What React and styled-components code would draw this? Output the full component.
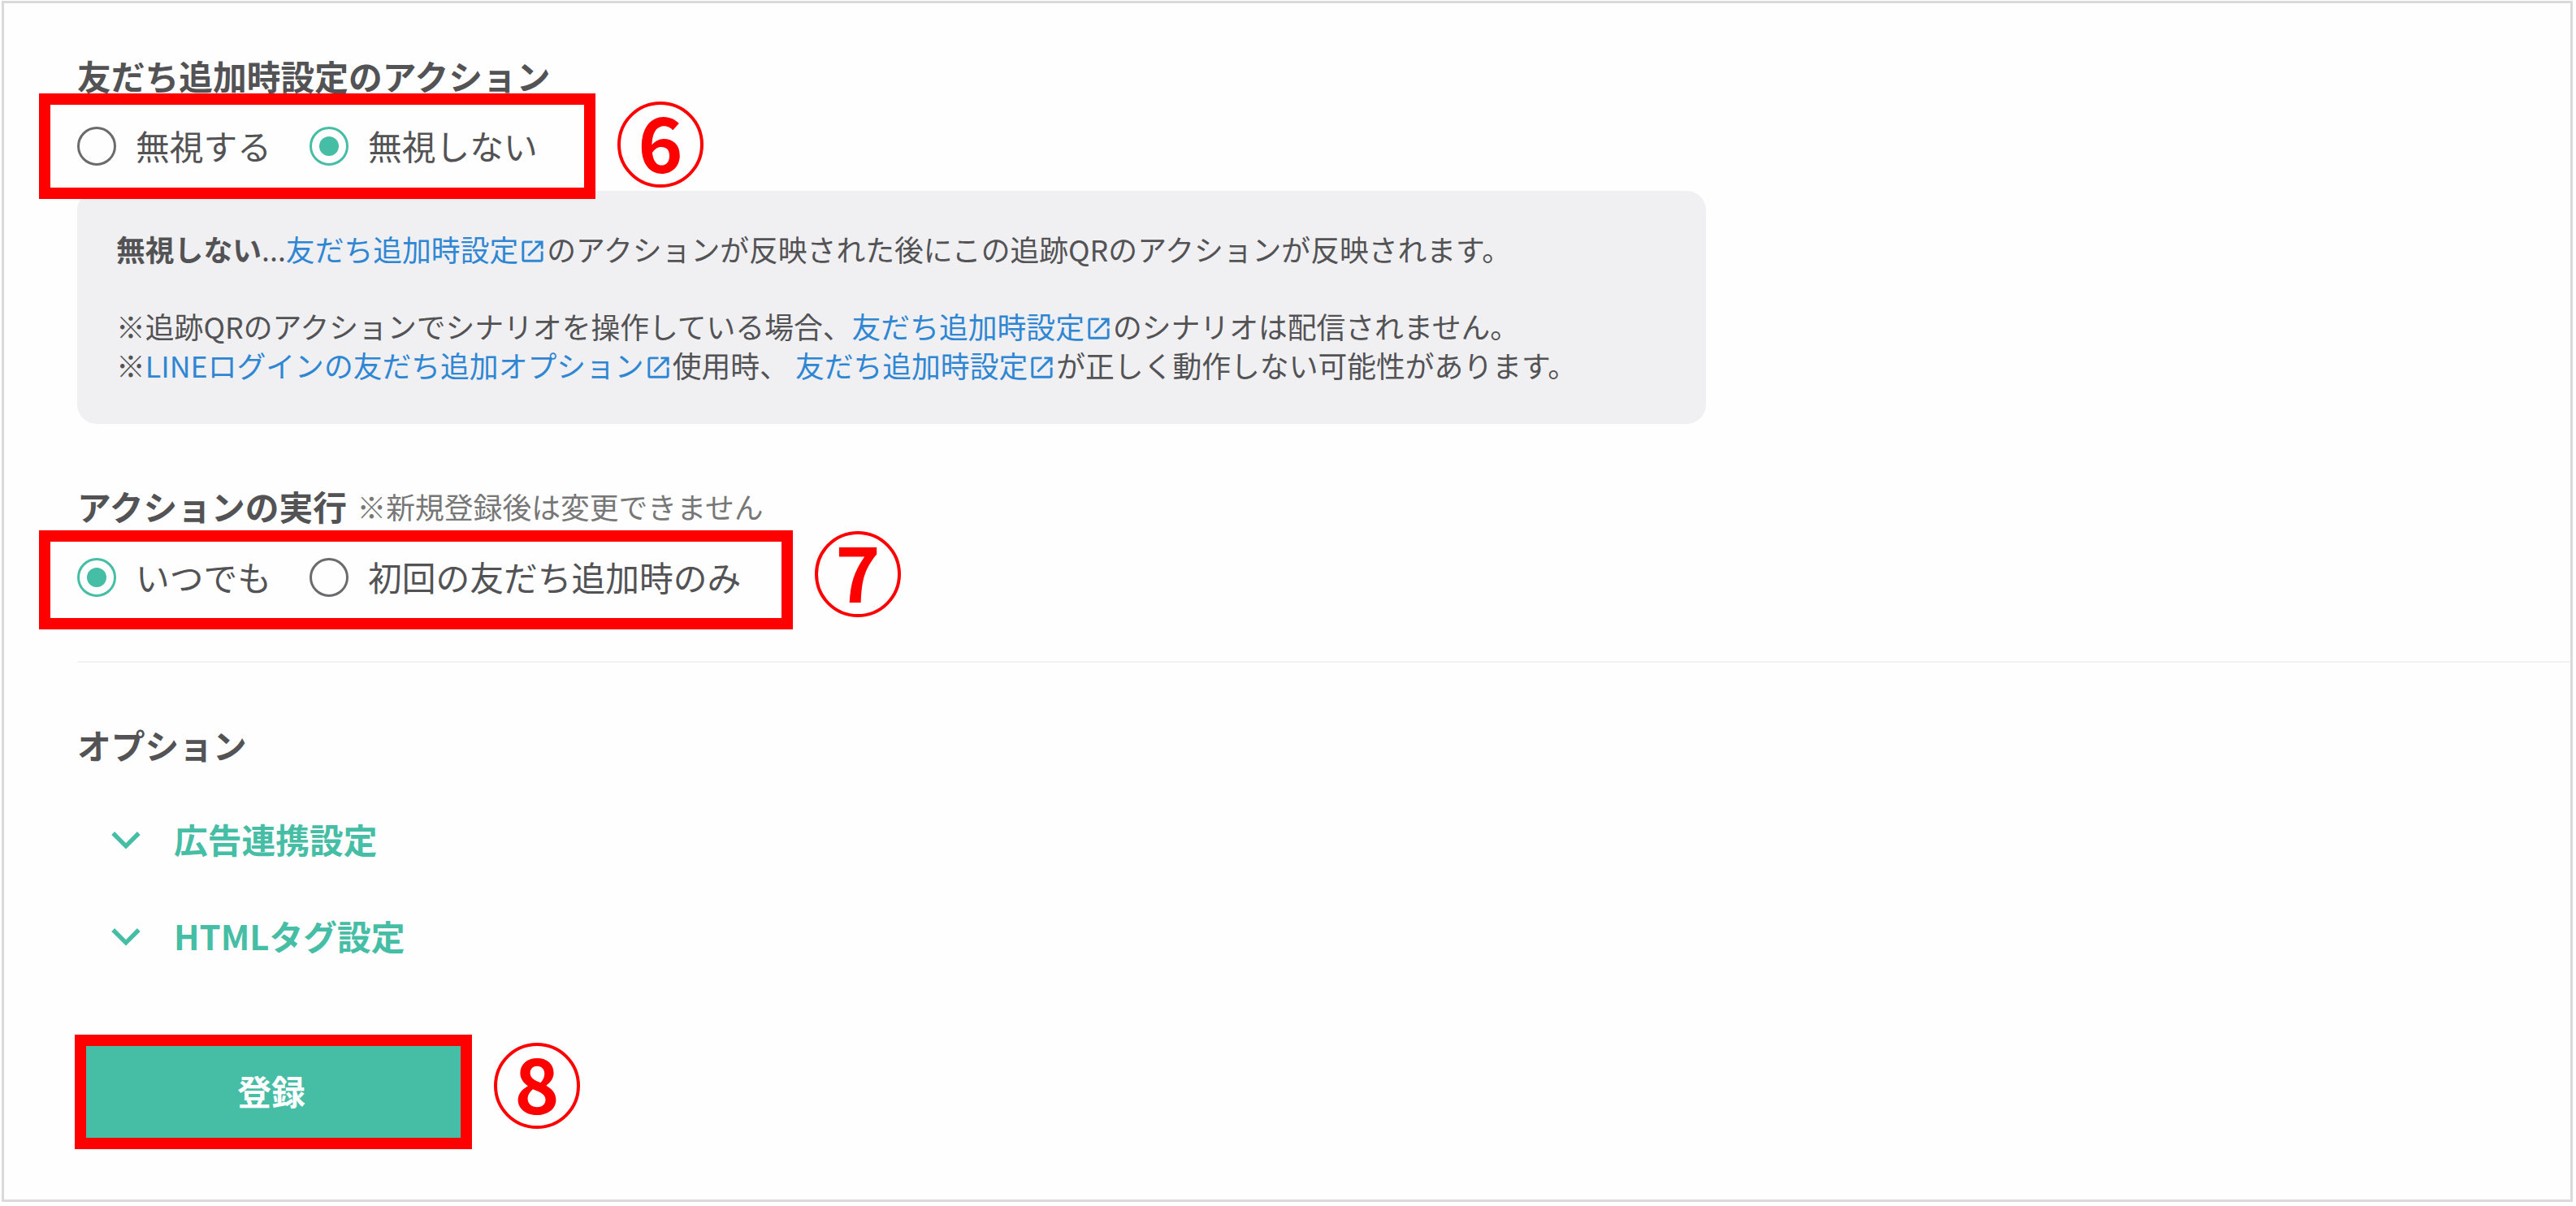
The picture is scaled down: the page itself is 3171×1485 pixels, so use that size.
import styled, { createGlobalStyle } from "styled-components";

const OpenIcon = () => (
  <IconSvg viewBox="0 0 24 24">
    <path d="M19 19H5V5h7V3H5a2 2 0 0 0-2 2v14a2 2 0 0 0 2 2h14c1.1 0 2-.9 2-2v-7h-2v7zM14 3v2h3.59l-9.83 9.83 1.41 1.41L19 6.41V10h2V3h-7z" />
  </IconSvg>
);

const HelpLink = ({ children }) => (
  <Anchor href="#">
    {children}
    <OpenIcon />
  </Anchor>
);

const RadioOption = ({ label, checked }) => (
  <Option>
    <Radio $checked={checked} />
    <span>{label}</span>
  </Option>
);

const AccordionItem = ({ label }) => (
  <Item>
    <svg width="36" height="24" viewBox="0 0 36 24">
      <path d="M2.2 3 L18 18.8 L33.8 3" />
    </svg>
    <span>{label}</span>
  </Item>
);

const App = () => {
  return (
    <>
      <GlobalStyle />
      <Page>
        <Title>友だち追加時設定のアクション</Title>
        <StepRow>
          <Highlight $width={685} $height={130}>
            <RadioOption label="無視する" />
            <RadioOption label="無視しない" checked />
          </Highlight>
          <Step $top={10}>6</Step>
        </StepRow>
        <Panel>
          <p>
            <b>無視しない</b>...<HelpLink>友だち追加時設定</HelpLink>
            のアクションが反映された後にこの追跡QRのアクションが反映されます。
          </p>
          <br />
          <p>
            ※追跡QRのアクションでシナリオを操作している場合、
            <HelpLink>友だち追加時設定</HelpLink>
            のシナリオは配信されません。
          </p>
          <p>
            ※<HelpLink>LINEログインの友だち追加オプション</HelpLink>
            使用時、 <HelpLink>友だち追加時設定</HelpLink>
            が正しく動作しない可能性があります。
          </p>
        </Panel>
        <Title $top={83}>
          アクションの実行 <small>※新規登録後は変更できません</small>
        </Title>
        <StepRow $top={8}>
          <Highlight $width={928} $height={122}>
            <RadioOption label="いつでも" checked />
            <RadioOption label="初回の友だち追加時のみ" />
          </Highlight>
          <Step $top={1}>7</Step>
        </StepRow>
        <Divider />
        <Title $top={83}>オプション</Title>
        <Accordion>
          <AccordionItem label="広告連携設定" />
          <AccordionItem label="HTMLタグ設定" />
        </Accordion>
        <SubmitRow>
          <Submit>登録</Submit>
          <Step $top={10}>8</Step>
        </SubmitRow>
      </Page>
    </>
  );
};

const GlobalStyle = createGlobalStyle`
  * {
    box-sizing: border-box;
  }
  body {
    margin: 0;
    background: #fff;
    color: #535355;
    font-family: "Noto Sans CJK JP", sans-serif;
    font-size: 41.75px;
  }
  p {
    margin: 0;
  }
`;

const Page = styled.main`
  width: 3165px;
  height: 1479px;
  margin: 1px 0 0 2px;
  padding: 71px 0 0 90px;
  border: 3px solid #dadada;
  background: #fefefe;
`;

const Title = styled.h2`
  height: 40px;
  margin: ${({ $top = 0 }) => $top}px 0 0;
  font-size: 41.75px;
  font-weight: 700;
  line-height: 36px;
  white-space: nowrap;
  small {
    margin-left: 3px;
    color: #777;
    font-size: 35.8px;
    font-weight: 400;
    line-height: 1;
    vertical-align: 2px;
  }
`;

const StepRow = styled.div`
  position: relative;
  z-index: 1;
  display: flex;
  gap: 27px;
  margin: ${({ $top = 0 }) => $top}px 0 0 -47px;
`;

const Highlight = styled.div`
  display: flex;
  gap: 47px;
  width: ${({ $width }) => $width}px;
  height: ${({ $height }) => $height}px;
  padding: ${({ $height }) => ($height === 130 ? 27 : 20)}px 0 0 33px;
  border: 14px solid #f00;
`;

const Option = styled.label`
  display: flex;
  gap: 24px;
  height: 48px;
  line-height: 46px;
  white-space: nowrap;
`;

const Radio = styled.span`
  display: flex;
  width: 48px;
  height: 48px;
  padding: 9px;
  border: 3px solid ${({ $checked }) => ($checked ? "#46bda5" : "#6b6b6d")};
  border-radius: 50%;
  &::after {
    content: "";
    flex: 1;
    border-radius: 50%;
    background: ${({ $checked }) => ($checked ? "#46bda5" : "transparent")};
  }
`;

const Step = styled.span`
  display: flex;
  justify-content: center;
  width: 106px;
  height: 106px;
  margin-top: ${({ $top }) => $top}px;
  border: 4px solid #f00;
  border-radius: 50%;
  color: #f00;
  font-size: 94px;
  font-weight: 700;
  line-height: 86px;
`;

const Panel = styled.section`
  width: 2005px;
  height: 287px;
  margin-top: -10px;
  padding: 48px;
  border-radius: 24px;
  background: #f0f0f3;
  font-size: 35.8px;
  line-height: 47.6px;
  white-space: nowrap;
`;

const Anchor = styled.a`
  color: #2f87d3;
  text-decoration: none;
`;

const IconSvg = styled.svg`
  width: 35px;
  height: 35px;
  fill: currentColor;
  vertical-align: -5px;
`;

const Divider = styled.hr`
  height: 2px;
  margin: 39px 0 0;
  border: 0;
  background: #f2f2f2;
`;

const Accordion = styled.div`
  display: flex;
  flex-direction: column;
  gap: 79px;
  margin: 76px 0 0 42px;
`;

const Item = styled.div`
  display: flex;
  align-items: flex-start;
  gap: 41px;
  height: 40px;
  color: #46bda5;
  font-weight: 700;
  line-height: 36px;
  svg {
    margin-top: 8px;
  }
  path {
    fill: none;
    stroke: currentColor;
    stroke-width: 5.4;
  }
`;

const SubmitRow = styled.div`
  display: flex;
  gap: 27px;
  margin: 100px 0 0 -3px;
`;

const Submit = styled.button`
  width: 489px;
  height: 141px;
  padding: 0 5px 3px 0;
  border: 14px solid #f00;
  background: #46bda5;
  color: #fff;
  font: 700 41.75px "Noto Sans CJK JP", sans-serif;
`;

export default App;
